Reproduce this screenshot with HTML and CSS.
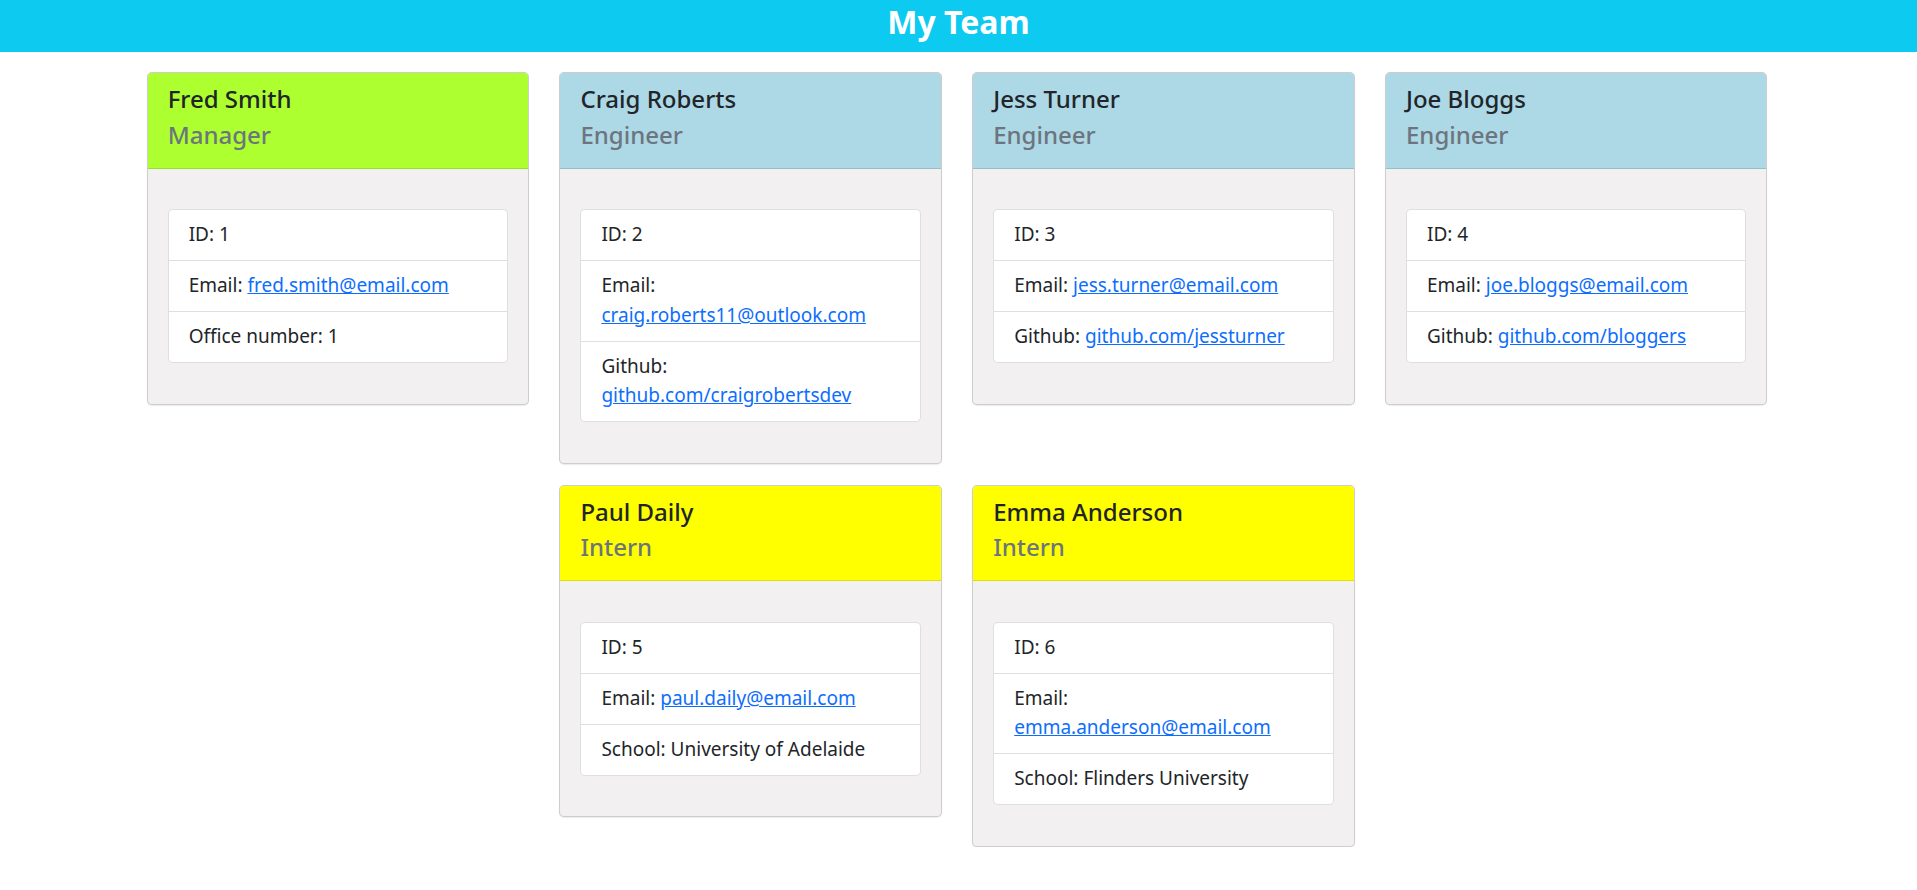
FILE: index.html
```html
<!DOCTYPE html>
<html lang="en">
<head>
<meta charset="utf-8">
<title>My Team</title>
<link rel="stylesheet" href="styles.css">
</head>
<body>
<header class="topbar">
  <h1 class="topbar-title">My Team</h1>
</header>
<main class="team">
  <article class="card">
    <div class="card-header manager">
      <h2 class="card-name">Fred Smith</h2>
      <h3 class="card-role">Manager</h3>
    </div>
    <div class="card-body">
      <ul class="info-list">
        <li class="info-item">ID: 1</li>
        <li class="info-item">Email: <a href="mailto:fred.smith@email.com">fred.smith@email.com</a></li>
        <li class="info-item">Office number: 1</li>
      </ul>
    </div>
  </article>
  <article class="card">
    <div class="card-header engineer">
      <h2 class="card-name">Craig Roberts</h2>
      <h3 class="card-role">Engineer</h3>
    </div>
    <div class="card-body">
      <ul class="info-list">
        <li class="info-item">ID: 2</li>
        <li class="info-item">Email: <a href="mailto:craig.roberts11@outlook.com">craig.roberts11@outlook.com</a></li>
        <li class="info-item">Github: <a href="#">github.com/craigrobertsdev</a></li>
      </ul>
    </div>
  </article>
  <article class="card">
    <div class="card-header engineer">
      <h2 class="card-name">Jess Turner</h2>
      <h3 class="card-role">Engineer</h3>
    </div>
    <div class="card-body">
      <ul class="info-list">
        <li class="info-item">ID: 3</li>
        <li class="info-item">Email: <a href="mailto:jess.turner@email.com">jess.turner@email.com</a></li>
        <li class="info-item">Github: <a href="#">github.com/jessturner</a></li>
      </ul>
    </div>
  </article>
  <article class="card">
    <div class="card-header engineer">
      <h2 class="card-name">Joe Bloggs</h2>
      <h3 class="card-role">Engineer</h3>
    </div>
    <div class="card-body">
      <ul class="info-list">
        <li class="info-item">ID: 4</li>
        <li class="info-item">Email: <a href="mailto:joe.bloggs@email.com">joe.bloggs@email.com</a></li>
        <li class="info-item">Github: <a href="#">github.com/bloggers</a></li>
      </ul>
    </div>
  </article>
  <article class="card">
    <div class="card-header intern">
      <h2 class="card-name">Paul Daily</h2>
      <h3 class="card-role">Intern</h3>
    </div>
    <div class="card-body">
      <ul class="info-list">
        <li class="info-item">ID: 5</li>
        <li class="info-item">Email: <a href="mailto:paul.daily@email.com">paul.daily@email.com</a></li>
        <li class="info-item">School: University of Adelaide</li>
      </ul>
    </div>
  </article>
  <article class="card">
    <div class="card-header intern">
      <h2 class="card-name">Emma Anderson</h2>
      <h3 class="card-role">Intern</h3>
    </div>
    <div class="card-body">
      <ul class="info-list">
        <li class="info-item">ID: 6</li>
        <li class="info-item">Email: <a href="mailto:emma.anderson@email.com">emma.anderson@email.com</a></li>
        <li class="info-item">School: Flinders University</li>
      </ul>
    </div>
  </article>
</main>
</body>
</html>
```

FILE: styles.css
```css
* {
  box-sizing: border-box;
}

body {
  margin: 0;
  background: #ffffff;
  color: #212529;
  font-family: "Noto Sans", "Open Sans", sans-serif;
  font-size: 19px;
  line-height: 1.5;
}

.topbar {
  background: #0dcaf0;
  padding: 3px 0 11px;
  text-align: center;
}

.topbar-title {
  margin: 0;
  color: #ffffff;
  font-size: 32px;
  font-weight: 700;
  line-height: 38px;
}

.team {
  display: flex;
  flex-wrap: wrap;
  justify-content: center;
  align-items: flex-start;
  column-gap: 30.4px;
  row-gap: 21px;
  margin-top: 20px;
  padding-right: 3px;
}

.card {
  width: 382.4px;
  background: #f2f0f1;
  border: 1px solid rgba(0, 0, 0, 0.15);
  border-radius: 5px;
  box-shadow: 0 1px 1px rgba(0, 0, 0, 0.08);
  overflow: hidden;
}

.card-header {
  padding: 12px 20px 10px;
  border-bottom: 1px solid rgba(0, 0, 0, 0.125);
}

.manager {
  background: #adff2f;
}

.engineer {
  background: #add8e6;
}

.intern {
  background: #ffff00;
}

.card-name,
.card-role {
  font-size: 24px;
  font-weight: 500;
  line-height: 1.2;
}

.card-name {
  margin: 0 0 7px;
  color: #212529;
}

.card-role {
  margin: 0 0 8px;
  color: #6c757d;
}

.card-body {
  padding: 40.5px 20px 40.5px;
}

.info-list {
  list-style: none;
  margin: 0;
  padding: 0;
  background: #ffffff;
  border: 1px solid rgba(0, 0, 0, 0.125);
  border-radius: 5px;
}

.info-item {
  padding: 10.25px 20px;
  line-height: 29.5px;
}

.info-item + .info-item {
  border-top: 1px solid rgba(0, 0, 0, 0.125);
}

.info-item a {
  color: #0d6efd;
  text-decoration: underline;
}
```
